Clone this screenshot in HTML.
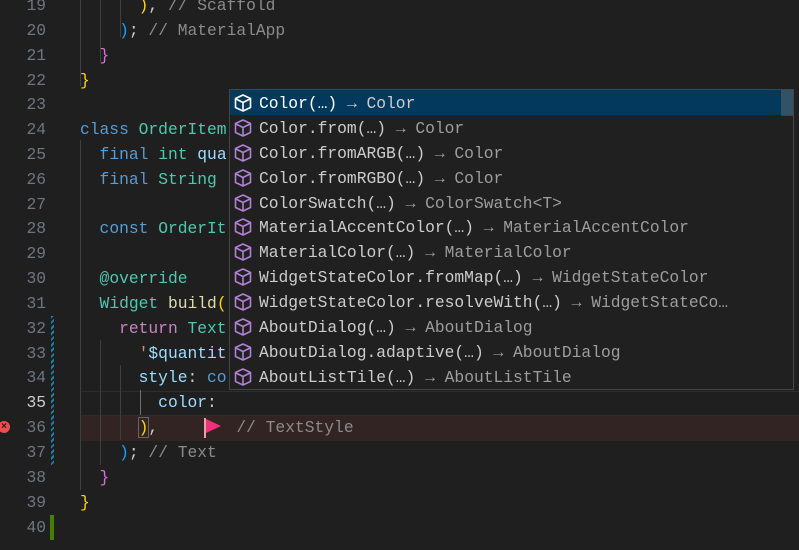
<!DOCTYPE html>
<html><head><meta charset="utf-8"><style>
body{margin:0;width:799px;height:550px;background:#1f1f1f;overflow:hidden;position:relative;font-family:"Liberation Mono",monospace;font-size:16.3px;}
.ln{position:absolute;left:0;width:46px;text-align:right;color:#6e7681;height:25px;line-height:25px;}
.c{position:absolute;left:80px;height:25px;line-height:25px;white-space:pre;color:#cccccc;}
.g{position:absolute;width:1px;background:#404040;}
.kw{color:#569cd6}.ty{color:#4ec9b0}.ct{color:#c586c0}.va{color:#9cdcfe}.cm{color:#8b8b8b}.st{color:#ce9178}
.y{color:#ffd700}.p{color:#da70d6}.b{color:#179fff}
#pop{position:absolute;left:229px;top:89px;width:563px;height:299px;background:#202020;border:1px solid #454545;overflow:hidden;}
.r{height:24.9px;line-height:28px;position:relative;white-space:pre;color:#cccccc;padding-left:29px;overflow:hidden}
.r.sel{background:#04395e;color:#fff}
.r .d{color:#9d9d9d}.r.sel .d{color:#cccccc}
.r svg{position:absolute;left:3px;top:3px}
</style></head><body>
<div style="position:absolute;left:80px;top:391px;width:719px;height:23px;border-top:1px solid #2e2e2e;border-bottom:1px solid #2e2e2e"></div>
<div style="position:absolute;left:80px;top:416px;width:719px;height:25px;background:#332424"></div>
<div class="g" style="left:80px;top:0;height:86px"></div>
<div class="g" style="left:100px;top:0;height:62px"></div>
<div class="g" style="left:120px;top:0;height:37px"></div>
<div class="g" style="left:80px;top:140px;height:350px"></div>
<div class="g" style="left:100px;top:340px;height:125px"></div>
<div class="g" style="left:120px;top:365px;height:75px"></div>
<div class="g" style="left:140px;top:390px;height:25px;background:#707070"></div>
<div style="position:absolute;left:51px;top:316px;width:3px;height:149px;background:repeating-linear-gradient(135deg,#1b81a8 0 2px,transparent 2px 4px)"></div>
<div style="position:absolute;left:50px;top:515px;width:4px;height:25px;background:#487e02"></div>
<div style="position:absolute;left:-2px;top:421px;width:12px;height:12px;border-radius:50%;background:#f14c4c;color:#1f1f1f;font:bold 10px/12px 'Liberation Sans';text-align:center">×</div>

<div class="ln" style="top:-7px">19</div><div class="c" style="top:-7px">      <span class="y">)</span>, <span class="cm">// Scaffold</span></div>
<div class="ln" style="top:18px">20</div><div class="c" style="top:18px">    <span class="b">)</span>; <span class="cm">// MaterialApp</span></div>
<div class="ln" style="top:43px">21</div><div class="c" style="top:43px">  <span class="p">}</span></div>
<div class="ln" style="top:68px">22</div><div class="c" style="top:68px"><span class="y">}</span></div>
<div class="ln" style="top:92px">23</div>
<div class="ln" style="top:117px">24</div><div class="c" style="top:117px"><span class="kw">class</span> <span class="ty">OrderItem</span></div>
<div class="ln" style="top:142px">25</div><div class="c" style="top:142px">  <span class="kw">final</span> <span class="ty">int</span> <span class="va">qua</span></div>
<div class="ln" style="top:167px">26</div><div class="c" style="top:167px">  <span class="kw">final</span> <span class="ty">String</span></div>
<div class="ln" style="top:192px">27</div>
<div class="ln" style="top:216px">28</div><div class="c" style="top:216px">  <span class="kw">const</span> <span class="ty">OrderIt</span></div>
<div class="ln" style="top:241px">29</div>
<div class="ln" style="top:266px">30</div><div class="c" style="top:266px">  <span class="ty">@override</span></div>
<div class="ln" style="top:291px">31</div><div class="c" style="top:291px">  <span class="ty">Widget</span> <span style="color:#dcdcaa">build</span><span class="y">(</span></div>
<div class="ln" style="top:316px">32</div><div class="c" style="top:316px">    <span class="ct">return</span> <span class="ty">Text</span></div>
<div class="ln" style="top:341px">33</div><div class="c" style="top:341px">      <span class="st">'</span><span class="va">$quantit</span></div>
<div class="ln" style="top:365px">34</div><div class="c" style="top:365px">      <span class="va">style</span>: <span class="kw">co</span></div>
<div class="ln" style="top:390px;color:#cccccc">35</div><div class="c" style="top:390px">        <span class="va">color</span>:</div>
<div class="ln" style="top:415px">36</div><div class="c" style="top:415px">      <span class="y" style="outline:1px solid #666">)</span>,        <span class="cm">// TextStyle</span></div>
<svg style="position:absolute;left:204px;top:418px" width="18" height="20"><rect x="0" y="0" width="2" height="20" fill="#e8a0a0"/><path d="M2 1 L17 8 L2 15Z" fill="#f0307a"/></svg>
<div class="ln" style="top:440px">37</div><div class="c" style="top:440px">    <span class="b">)</span>; <span class="cm">// Text</span></div>
<div class="ln" style="top:465px">38</div><div class="c" style="top:465px">  <span class="p">}</span></div>
<div class="ln" style="top:490px">39</div><div class="c" style="top:490px"><span class="y">}</span></div>
<div class="ln" style="top:515px">40</div>

<div id="pop">
<svg width="0" height="0" style="position:absolute"><defs><g id="ic" fill="none" stroke-width="1.6" stroke-linejoin="round"><path d="M10 2 L17.5 5.5 L17.5 14.5 L10 18 L2.5 14.5 L2.5 5.5Z"/><path d="M3 6 L10 9.5 L17 6 M10 9.5 L10 17.5"/></g></defs></svg>
<div class="r sel"><svg width="20" height="20" stroke="#fff"><use href="#ic"/></svg><span style="color:#fff">Color</span>(…) <span class="d">→ Color</span></div>
<div class="r"><svg width="20" height="20" stroke="#b180d7"><use href="#ic"/></svg>Color.from(…) <span class="d">→ Color</span></div>
<div class="r"><svg width="20" height="20" stroke="#b180d7"><use href="#ic"/></svg>Color.fromARGB(…) <span class="d">→ Color</span></div>
<div class="r"><svg width="20" height="20" stroke="#b180d7"><use href="#ic"/></svg>Color.fromRGBO(…) <span class="d">→ Color</span></div>
<div class="r"><svg width="20" height="20" stroke="#b180d7"><use href="#ic"/></svg>ColorSwatch(…) <span class="d">→ ColorSwatch&lt;T&gt;</span></div>
<div class="r"><svg width="20" height="20" stroke="#b180d7"><use href="#ic"/></svg>MaterialAccentColor(…) <span class="d">→ MaterialAccentColor</span></div>
<div class="r"><svg width="20" height="20" stroke="#b180d7"><use href="#ic"/></svg>MaterialColor(…) <span class="d">→ MaterialColor</span></div>
<div class="r"><svg width="20" height="20" stroke="#b180d7"><use href="#ic"/></svg>WidgetStateColor.fromMap(…) <span class="d">→ WidgetStateColor</span></div>
<div class="r"><svg width="20" height="20" stroke="#b180d7"><use href="#ic"/></svg>WidgetStateColor.resolveWith(…) <span class="d">→ WidgetStateCo…</span></div>
<div class="r"><svg width="20" height="20" stroke="#b180d7"><use href="#ic"/></svg>AboutDialog(…) <span class="d">→ AboutDialog</span></div>
<div class="r"><svg width="20" height="20" stroke="#b180d7"><use href="#ic"/></svg>AboutDialog.adaptive(…) <span class="d">→ AboutDialog</span></div>
<div class="r"><svg width="20" height="20" stroke="#b180d7"><use href="#ic"/></svg>AboutListTile(…) <span class="d">→ AboutListTile</span></div>
<div style="position:absolute;right:0;top:0;width:12px;height:26px;background:rgba(121,121,121,0.4)"></div>
</div>
</body></html>
